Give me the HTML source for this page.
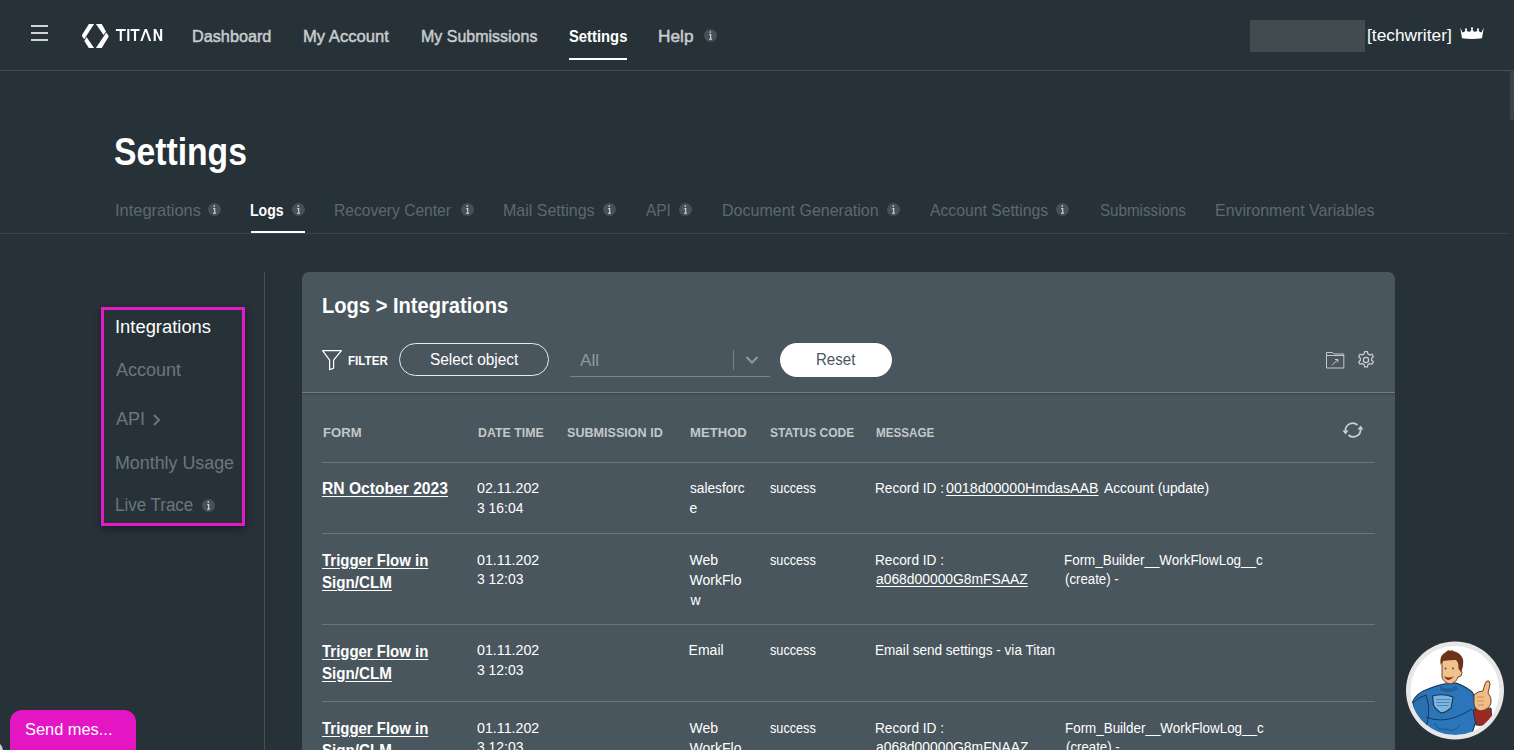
<!DOCTYPE html>
<html><head><meta charset="utf-8"><title>Titan Settings - Logs</title>
<style>
html,body{margin:0;padding:0;width:1514px;height:750px;overflow:hidden;background:#263238;font-family:"Liberation Sans",sans-serif;}
.t{position:absolute;white-space:nowrap;line-height:1;transform-origin:0 0;}
.abs{position:absolute;}
.info{position:absolute;border-radius:50%;}
.info svg{position:absolute;left:0;top:0;}
</style></head><body>
<!-- header -->
<div class="abs" style="left:0;top:70px;width:1514px;height:1px;background:#454d52"></div>
<div class="abs" style="left:31px;top:25px;width:17px;height:2px;background:#d2d2d2"></div>
<div class="abs" style="left:31px;top:32px;width:17px;height:2px;background:#d2d2d2"></div>
<div class="abs" style="left:31px;top:39px;width:17px;height:2px;background:#d2d2d2"></div>
<svg class="abs" style="left:0;top:0" width="120" height="60" viewBox="0 0 120 60">
 <g fill="#ffffff">
  <path d="M88.9,24 L94.1,24 L84.2,39.3 L82.2,36.6 Q81.6,35.5 82.3,34.4 Z"/>
  <path d="M86.5,37.1 L94.1,48 L88.8,48 L84.4,41 Z"/>
  <path d="M95.9,24 L101.7,24 L106,31.4 L103.6,35 Z"/>
  <path d="M106.3,32.6 L108.3,35.4 Q108.8,36.3 108.3,37.2 L101.7,48 L95.9,48 Z"/>
 </g>
</svg>
<svg class="abs" style="left:110px;top:24px" width="60" height="22" viewBox="110 24 60 22"><g stroke="#fff" stroke-width="2.1" fill="none" stroke-linejoin="miter">
 <path d="M115.9,30 H125.7 M120.8,30 V41"/><path d="M128.3,29 V41"/><path d="M130.5,30 H139.5 M135,30 V41"/></g><g fill="#fff"><path d="M140.3,41 L144.7,28.9 L146.9,28.9 L151.2,41 L149,41 L145.8,31.6 L142.5,41 Z"/><path d="M153.7,41 L153.7,29 L156,29 L160.1,37.4 L160.1,29 L162.2,29 L162.2,41 L159.9,41 L155.8,32.6 L155.8,41 Z"/></g></svg>
<div class="abs" style="left:569px;top:58px;width:58px;height:2px;background:#ffffff"></div>
<div class="info" style="left:704px;top:29px;width:13px;height:13px;background:#465056"><svg width="13" height="13" viewBox="0 0 13 13"><path d="M5.4 3.2h1.6M6.5 2.2v0.9M5.3 5.6h1.4v4.4M5 10.2h3" stroke="#d4d7d9" stroke-width="1.15" fill="none"/></svg></div>
<div class="abs" style="left:1250px;top:20px;width:115px;height:32px;background:#414b50"></div>
<svg class="abs" style="left:1460px;top:27px" width="24" height="13" viewBox="0 0 24 13">
 <path fill="#fff" d="M0.2,0.4 L2.4,5.2 Q4,5.9 5.2,3.4 L6,2.4 L6.8,3.4 Q8.6,6 10.6,4 L12,1.6 L13.4,4 Q15.4,6 17.2,3.4 L18,2.4 L18.8,3.4 Q20,5.9 21.6,5.2 L23.8,0.4 L22,11.2 Q12,12.8 2,11.2 Z"/>
 <circle cx="6" cy="2.2" r="1" fill="#fff"/><circle cx="12" cy="1.3" r="1.1" fill="#fff"/><circle cx="18" cy="2.2" r="1" fill="#fff"/>
</svg>
<div class="abs" style="left:1510px;top:71px;width:4px;height:49px;background:#3a454b;border-radius:2px"></div>
<!-- tabs -->
<div class="info" style="left:208px;top:203px;width:13px;height:13px;background:#465056"><svg width="13" height="13" viewBox="0 0 13 13"><path d="M5.4 3.2h1.6M6.5 2.2v0.9M5.3 5.6h1.4v4.4M5 10.2h3" stroke="#d4d7d9" stroke-width="1.15" fill="none"/></svg></div><div class="info" style="left:292px;top:203px;width:13px;height:13px;background:#465056"><svg width="13" height="13" viewBox="0 0 13 13"><path d="M5.4 3.2h1.6M6.5 2.2v0.9M5.3 5.6h1.4v4.4M5 10.2h3" stroke="#d4d7d9" stroke-width="1.15" fill="none"/></svg></div><div class="info" style="left:461px;top:203px;width:13px;height:13px;background:#465056"><svg width="13" height="13" viewBox="0 0 13 13"><path d="M5.4 3.2h1.6M6.5 2.2v0.9M5.3 5.6h1.4v4.4M5 10.2h3" stroke="#d4d7d9" stroke-width="1.15" fill="none"/></svg></div><div class="info" style="left:603px;top:203px;width:13px;height:13px;background:#465056"><svg width="13" height="13" viewBox="0 0 13 13"><path d="M5.4 3.2h1.6M6.5 2.2v0.9M5.3 5.6h1.4v4.4M5 10.2h3" stroke="#d4d7d9" stroke-width="1.15" fill="none"/></svg></div><div class="info" style="left:679px;top:203px;width:13px;height:13px;background:#465056"><svg width="13" height="13" viewBox="0 0 13 13"><path d="M5.4 3.2h1.6M6.5 2.2v0.9M5.3 5.6h1.4v4.4M5 10.2h3" stroke="#d4d7d9" stroke-width="1.15" fill="none"/></svg></div><div class="info" style="left:887px;top:203px;width:13px;height:13px;background:#465056"><svg width="13" height="13" viewBox="0 0 13 13"><path d="M5.4 3.2h1.6M6.5 2.2v0.9M5.3 5.6h1.4v4.4M5 10.2h3" stroke="#d4d7d9" stroke-width="1.15" fill="none"/></svg></div><div class="info" style="left:1056px;top:203px;width:13px;height:13px;background:#465056"><svg width="13" height="13" viewBox="0 0 13 13"><path d="M5.4 3.2h1.6M6.5 2.2v0.9M5.3 5.6h1.4v4.4M5 10.2h3" stroke="#d4d7d9" stroke-width="1.15" fill="none"/></svg></div>
<div class="abs" style="left:251px;top:231px;width:54px;height:2px;background:#ffffff"></div>
<div class="abs" style="left:0;top:233px;width:1509px;height:1px;background:#3a4349"></div>
<!-- sidebar -->
<div class="abs" style="left:101px;top:307px;width:138px;height:213px;border:3px solid #e31bc6;box-shadow:0 3px 8px rgba(0,0,0,0.4)"></div>
<svg class="abs" style="left:150px;top:411px" width="14" height="18" viewBox="0 0 14 18"><path d="M4,4 L9,9 L4,14" stroke="#6d767b" stroke-width="1.9" fill="none"/></svg>
<div class="info" style="left:202px;top:499px;width:13px;height:13px;background:#465056"><svg width="13" height="13" viewBox="0 0 13 13"><path d="M5.4 3.2h1.6M6.5 2.2v0.9M5.3 5.6h1.4v4.4M5 10.2h3" stroke="#d4d7d9" stroke-width="1.15" fill="none"/></svg></div>
<div class="abs" style="left:264px;top:272px;width:1px;height:478px;background:#484f54"></div>
<!-- card -->
<div class="abs" style="left:302px;top:272px;width:1093px;height:500px;background:#4a565d;border-radius:7px"></div>
<svg class="abs" style="left:320px;top:348px" width="24" height="24" viewBox="0 0 24 24"><path d="M2.6,2.6 H21.4 L13.6,12.2 V20.2 L9.6,21.6 V12.2 Z" stroke="#ffffff" stroke-width="1.2" fill="none" stroke-linejoin="round"/></svg>
<div class="abs" style="left:399px;top:343px;width:148px;height:31px;border:1.5px solid #e8eaeb;border-radius:17px;box-sizing:content-box"></div>
<div class="abs" style="left:570px;top:376px;width:200px;height:1px;background:#7a868c"></div>
<div class="abs" style="left:733px;top:350px;width:1px;height:20px;background:#76838a"></div>
<svg class="abs" style="left:744px;top:354px" width="16" height="12" viewBox="0 0 16 12"><path d="M2.5,3 L8,8.5 L13.5,3" stroke="#8b9aa2" stroke-width="2" fill="none"/></svg>
<div class="abs" style="left:780px;top:343px;width:112px;height:34px;background:#ffffff;border-radius:17px"></div>
<svg class="abs" style="left:1324px;top:350px" width="22" height="20" viewBox="0 0 22 20"><g stroke="#c4c9cc" stroke-width="1" fill="none"><path d="M2.5,2.5 H8.5 L10,4 H19.8 V18 H2.5 Z"/><path d="M2.5,5.5 H19.8"/><path d="M8.2,15 L13.9,9.5 M11,9.5 H13.9 V12.4"/></g></svg>
<svg class="abs" style="left:1356px;top:350px" width="20" height="20" viewBox="0 0 20 20"><path fill="none" stroke="#c9ced1" stroke-width="1.2" d="M8.6,1.6 h2.8 l0.5,2.3 a6.2,6.2 0 0 1 1.8,1.05 l2.25,-0.75 l1.4,2.42 l-1.75,1.57 a6.2,6.2 0 0 1 0,2.1 l1.75,1.57 l-1.4,2.42 l-2.25,-0.75 a6.2,6.2 0 0 1 -1.8,1.05 l-0.5,2.3 h-2.8 l-0.5,-2.3 a6.2,6.2 0 0 1 -1.8,-1.05 l-2.25,0.75 l-1.4,-2.42 l1.75,-1.57 a6.2,6.2 0 0 1 0,-2.1 l-1.75,-1.57 l1.4,-2.42 l2.25,0.75 a6.2,6.2 0 0 1 1.8,-1.05 Z"/><circle cx="10" cy="10" r="2.6" fill="none" stroke="#c9ced1" stroke-width="1.2"/></svg>
<div class="abs" style="left:302px;top:392px;width:1093px;height:1px;background:#6f7c83"></div>
<div class="abs" style="left:302px;top:393px;width:1093px;height:3px;background:linear-gradient(#3f484e,#4a565d)"></div>
<svg class="abs" style="left:1341px;top:420px" width="24" height="20" viewBox="0 0 24 20"><g fill="none" stroke="#c9ced1" stroke-width="1.7"><path d="M4.5,11 A7.2,7.2 0 0 1 16.5,5"/><path d="M19.5,9 A7.2,7.2 0 0 1 7.5,15"/></g><path fill="#c9ced1" d="M1.5,10.5 L7.5,10.5 L4.5,14.5 Z M16.5,9.5 L22.5,9.5 L19.5,5.5 Z"/></svg>
<div class="abs" style="left:322px;top:462px;width:1053px;height:1px;background:#6a767c"></div>
<div class="abs" style="left:322px;top:533px;width:1053px;height:1px;background:#6a767c"></div>
<div class="abs" style="left:322px;top:624px;width:1053px;height:1px;background:#6a767c"></div>
<div class="abs" style="left:322px;top:701px;width:1053px;height:1px;background:#6a767c"></div>
<!-- chat button -->
<div class="abs" style="left:-14px;top:742px;width:17px;height:30px;border-radius:9px;background:#cfd2d3"></div>
<div class="abs" style="left:10px;top:710px;width:126px;height:50px;background:#e416c4;border-radius:12px"></div>
<!-- avatar -->
<svg class="abs" style="left:1404px;top:639px" width="102" height="104" viewBox="0 0 102 104">
 <defs><clipPath id="cc"><circle cx="51" cy="51.6" r="44.5"/></clipPath></defs>
 <circle cx="51" cy="51.6" r="49" fill="#e8e6e6"/>
 <circle cx="51" cy="51.6" r="44.5" fill="#ffffff"/>
 <g clip-path="url(#cc)" stroke-linejoin="round">
  <path d="M8,64 Q12,54 24,50 Q34,46 40,45 L52,44 Q60,47 64,50 Q70,53 70,58 L72,70 Q74,80 70,88 L66,100 L8,100 Z" fill="#2b76bb" stroke="#17324d" stroke-width="1.1"/>
  <path d="M9,64 Q14,58 22,56 Q26,66 24,80 L20,96 Q12,90 9,80 Z" fill="#2a70ae" stroke="#17324d" stroke-width="0.9"/>
  <path d="M36,47 Q44,52 52,47 L54,50 Q46,56 36,51 Z" fill="#245f96"/>
  <path d="M28.6,57 Q39,54 49,58 L47,69 Q41,74 37,74 Q31,70 29.5,66 Z" fill="#7db4e0" stroke="#17324d" stroke-width="1.1"/>
  <path d="M32,60.5 H46 M32,63.5 H45.5 M33,66.5 H44.5" stroke="#3f78ad" stroke-width="0.8"/>
  <path d="M22,78 Q36,84 52,78 Q62,74 68,70" fill="none" stroke="#17324d" stroke-width="0.9"/>
  <path d="M30,84 Q34,92 42,90 Q50,94 56,86" fill="none" stroke="#1d4f80" stroke-width="0.9"/>
  <path d="M69,71 L87,69 L88,80 Q82,88 72,86 Z" fill="#9b2a22" stroke="#17324d" stroke-width="0.9"/>
  <path d="M70,56 Q74,52 79,52 L81,45 Q82,41 85,42 Q87,44 85,50 L84,54 Q88,58 87,64 Q85,71 76,72 Q70,70 70,64 Z" fill="#f0bd87" stroke="#5a3418" stroke-width="0.9"/>
  <path d="M73,58 H80 M73,62 H80 M74,66 H80" stroke="#b57a45" stroke-width="0.7"/>
  <path d="M38,24 Q38,18 44,17 L53,18 Q56,22 55,30 L57,31 Q59,33 57,37 L54,38 Q52,44 46,45 Q40,44 38,38 Z" fill="#f2c18c" stroke="#5a3418" stroke-width="0.9"/>
  <path d="M36.5,26 Q35,16 42,13 Q44,10 47,12 Q49,10 49,12 Q56,13 59,20 Q60,27 57,33 L55,30 Q55,24 52,21 Q45,21 39,22 Z" fill="#6b3419"/>
  <path d="M40,37 Q45,40 50,37 Q47,41 44,41 Q41,40 40,37 Z" fill="#8f2a20"/>
  <circle cx="41.5" cy="29.5" r="1" fill="#2a5d8c"/><circle cx="49" cy="29.5" r="1" fill="#2a5d8c"/>
 </g>
</svg>
<span class="t" style="left:192.05px;top:27.61px;font-size:17px;font-weight:400;color:#c9cccd;transform:scaleX(0.9546);-webkit-text-stroke:0.5px currentColor;">Dashboard</span>
<span class="t" style="left:303.02px;top:27.61px;font-size:17px;font-weight:400;color:#c9cccd;transform:scaleX(0.9763);-webkit-text-stroke:0.5px currentColor;">My Account</span>
<span class="t" style="left:421.06px;top:27.61px;font-size:17px;font-weight:400;color:#c9cccd;transform:scaleX(0.9406);-webkit-text-stroke:0.5px currentColor;">My Submissions</span>
<span class="t" style="left:569.00px;top:27.61px;font-size:17px;font-weight:700;color:#ffffff;transform:scaleX(0.8708);">Settings</span>
<span class="t" style="left:658.49px;top:27.61px;font-size:17px;font-weight:400;color:#c9cccd;transform:scaleX(1.0147);-webkit-text-stroke:0.5px currentColor;">Help</span>
<span class="t" style="left:1366.98px;top:27.21px;font-size:17px;font-weight:400;color:#ffffff;transform:scaleX(1.0195);">[techwriter]</span>
<span class="t" style="left:114.11px;top:133.13px;font-size:38px;font-weight:700;color:#ffffff;transform:scaleX(0.8865);">Settings</span>
<span class="t" style="left:114.53px;top:201.91px;font-size:17px;font-weight:400;color:#5f686d;transform:scaleX(0.9675);">Integrations</span>
<span class="t" style="left:250.47px;top:201.91px;font-size:17px;font-weight:700;color:#ffffff;transform:scaleX(0.8275);">Logs</span>
<span class="t" style="left:334.38px;top:201.91px;font-size:17px;font-weight:400;color:#5f686d;transform:scaleX(0.9166);">Recovery Center</span>
<span class="t" style="left:503.16px;top:201.91px;font-size:17px;font-weight:400;color:#5f686d;transform:scaleX(0.9403);">Mail Settings</span>
<span class="t" style="left:645.80px;top:201.91px;font-size:17px;font-weight:400;color:#5f686d;transform:scaleX(0.9071);">API</span>
<span class="t" style="left:721.76px;top:201.91px;font-size:17px;font-weight:400;color:#5f686d;transform:scaleX(0.9420);">Document Generation</span>
<span class="t" style="left:930.00px;top:201.91px;font-size:17px;font-weight:400;color:#5f686d;transform:scaleX(0.9254);">Account Settings</span>
<span class="t" style="left:1099.50px;top:201.91px;font-size:17px;font-weight:400;color:#5f686d;transform:scaleX(0.8918);">Submissions</span>
<span class="t" style="left:1215.06px;top:201.91px;font-size:17px;font-weight:400;color:#5f686d;transform:scaleX(0.9390);">Environment Variables</span>
<span class="t" style="left:114.78px;top:317.76px;font-size:18px;font-weight:400;color:#ffffff;transform:scaleX(1.0208);">Integrations</span>
<span class="t" style="left:115.50px;top:360.56px;font-size:18px;font-weight:400;color:#6d767b;transform:scaleX(0.9994);">Account</span>
<span class="t" style="left:115.50px;top:410.46px;font-size:18px;font-weight:400;color:#6d767b;transform:scaleX(0.9996);">API</span>
<span class="t" style="left:114.71px;top:453.76px;font-size:18px;font-weight:400;color:#6d767b;transform:scaleX(0.9912);">Monthly Usage</span>
<span class="t" style="left:114.76px;top:496.36px;font-size:18px;font-weight:400;color:#6d767b;transform:scaleX(0.9423);">Live Trace</span>
<span class="t" style="left:321.79px;top:295.28px;font-size:22px;font-weight:700;color:#ffffff;transform:scaleX(0.9145);">Logs &gt; Integrations</span>
<span class="t" style="left:348.30px;top:354.20px;font-size:13px;font-weight:700;color:#ffffff;transform:scaleX(0.8950);">FILTER</span>
<span class="t" style="left:430.00px;top:352.16px;font-size:16px;font-weight:400;color:#ffffff;transform:scaleX(0.9635);">Select object</span>
<span class="t" style="left:580.20px;top:352.86px;font-size:16px;font-weight:400;color:#8d989e;transform:scaleX(1.0797);">All</span>
<span class="t" style="left:816.16px;top:352.26px;font-size:16px;font-weight:400;color:#4a565d;transform:scaleX(0.9407);">Reset</span>
<span class="t" style="left:322.50px;top:425.80px;font-size:13px;font-weight:700;color:#c3c8cb;transform:scaleX(1.0069);">FORM</span>
<span class="t" style="left:477.50px;top:425.80px;font-size:13px;font-weight:700;color:#c3c8cb;transform:scaleX(0.9508);">DATE TIME</span>
<span class="t" style="left:567.00px;top:425.80px;font-size:13px;font-weight:700;color:#c3c8cb;transform:scaleX(0.9679);">SUBMISSION ID</span>
<span class="t" style="left:689.70px;top:425.80px;font-size:13px;font-weight:700;color:#c3c8cb;transform:scaleX(1.0082);">METHOD</span>
<span class="t" style="left:770.40px;top:425.80px;font-size:13px;font-weight:700;color:#c3c8cb;transform:scaleX(0.9239);">STATUS CODE</span>
<span class="t" style="left:875.50px;top:425.80px;font-size:13px;font-weight:700;color:#c3c8cb;transform:scaleX(0.8953);">MESSAGE</span>
<span class="t" style="left:321.52px;top:481.26px;font-size:16px;font-weight:700;color:#fff;transform:scaleX(0.9763);text-decoration:underline;text-underline-offset:2px;">RN October 2023</span>
<span class="t" style="left:477.00px;top:480.95px;font-size:14px;font-weight:400;color:#fff;transform:scaleX(1.0170);">02.11.202</span>
<span class="t" style="left:477.00px;top:500.75px;font-size:14px;font-weight:400;color:#fff;transform:scaleX(0.9931);">3 16:04</span>
<span class="t" style="left:689.50px;top:481.25px;font-size:14px;font-weight:400;color:#fff;transform:scaleX(0.9764);">salesforc</span>
<span class="t" style="left:689.50px;top:501.15px;font-size:14px;font-weight:400;color:#fff;transform:scaleX(1.0000);">e</span>
<span class="t" style="left:770.40px;top:481.25px;font-size:14px;font-weight:400;color:#fff;transform:scaleX(0.9056);">success</span>
<span class="t" style="left:874.82px;top:481.25px;font-size:14px;font-weight:400;color:#fff;transform:scaleX(0.9752);">Record ID :</span>
<span class="t" style="left:945.70px;top:481.25px;font-size:14px;font-weight:400;color:#fff;transform:scaleX(1.0155);text-decoration:underline;text-underline-offset:2px;">0018d00000HmdasAAB</span>
<span class="t" style="left:1104.00px;top:481.25px;font-size:14px;font-weight:400;color:#fff;transform:scaleX(0.9853);">Account (update)</span>
<span class="t" style="left:322.00px;top:553.06px;font-size:16px;font-weight:700;color:#fff;transform:scaleX(0.9344);text-decoration:underline;text-underline-offset:2px;">Trigger Flow in</span>
<span class="t" style="left:322.00px;top:575.46px;font-size:16px;font-weight:700;color:#fff;transform:scaleX(0.9464);text-decoration:underline;text-underline-offset:2px;">Sign/CLM</span>
<span class="t" style="left:477.00px;top:552.55px;font-size:14px;font-weight:400;color:#fff;transform:scaleX(1.0170);">01.11.202</span>
<span class="t" style="left:477.00px;top:572.35px;font-size:14px;font-weight:400;color:#fff;transform:scaleX(0.9931);">3 12:03</span>
<span class="t" style="left:689.60px;top:552.55px;font-size:14px;font-weight:400;color:#fff;transform:scaleX(1.0000);">Web</span>
<span class="t" style="left:689.60px;top:572.55px;font-size:14px;font-weight:400;color:#fff;transform:scaleX(1.0000);">WorkFlo</span>
<span class="t" style="left:690.60px;top:592.55px;font-size:14px;font-weight:400;color:#fff;transform:scaleX(1.0000);">w</span>
<span class="t" style="left:770.30px;top:552.55px;font-size:14px;font-weight:400;color:#fff;transform:scaleX(0.9056);">success</span>
<span class="t" style="left:874.82px;top:552.55px;font-size:14px;font-weight:400;color:#fff;transform:scaleX(0.9752);">Record ID :</span>
<span class="t" style="left:875.80px;top:572.35px;font-size:14px;font-weight:400;color:#fff;transform:scaleX(0.9898);text-decoration:underline;text-underline-offset:2px;">a068d00000G8mFSAAZ</span>
<span class="t" style="left:1064.44px;top:552.55px;font-size:14px;font-weight:400;color:#fff;transform:scaleX(0.9574);">Form_Builder__WorkFlowLog__c</span>
<span class="t" style="left:1065.40px;top:572.35px;font-size:14px;font-weight:400;color:#fff;transform:scaleX(0.9453);">(create) -</span>
<span class="t" style="left:322.00px;top:643.56px;font-size:16px;font-weight:700;color:#fff;transform:scaleX(0.9344);text-decoration:underline;text-underline-offset:2px;">Trigger Flow in</span>
<span class="t" style="left:322.00px;top:665.96px;font-size:16px;font-weight:700;color:#fff;transform:scaleX(0.9464);text-decoration:underline;text-underline-offset:2px;">Sign/CLM</span>
<span class="t" style="left:477.00px;top:643.05px;font-size:14px;font-weight:400;color:#fff;transform:scaleX(1.0170);">01.11.202</span>
<span class="t" style="left:477.00px;top:662.85px;font-size:14px;font-weight:400;color:#fff;transform:scaleX(0.9931);">3 12:03</span>
<span class="t" style="left:688.60px;top:643.05px;font-size:14px;font-weight:400;color:#fff;transform:scaleX(1.0000);">Email</span>
<span class="t" style="left:770.30px;top:643.05px;font-size:14px;font-weight:400;color:#fff;transform:scaleX(0.9056);">success</span>
<span class="t" style="left:874.83px;top:643.05px;font-size:14px;font-weight:400;color:#fff;transform:scaleX(0.9683);">Email send settings - via Titan</span>
<span class="t" style="left:322.00px;top:721.06px;font-size:16px;font-weight:700;color:#fff;transform:scaleX(0.9344);text-decoration:underline;text-underline-offset:2px;">Trigger Flow in</span>
<span class="t" style="left:322.00px;top:743.46px;font-size:16px;font-weight:700;color:#fff;transform:scaleX(0.9464);text-decoration:underline;text-underline-offset:2px;">Sign/CLM</span>
<span class="t" style="left:477.00px;top:720.55px;font-size:14px;font-weight:400;color:#fff;transform:scaleX(1.0170);">01.11.202</span>
<span class="t" style="left:477.00px;top:740.35px;font-size:14px;font-weight:400;color:#fff;transform:scaleX(0.9931);">3 12:03</span>
<span class="t" style="left:689.60px;top:720.55px;font-size:14px;font-weight:400;color:#fff;transform:scaleX(1.0000);">Web</span>
<span class="t" style="left:689.60px;top:740.55px;font-size:14px;font-weight:400;color:#fff;transform:scaleX(1.0000);">WorkFlo</span>
<span class="t" style="left:690.60px;top:760.55px;font-size:14px;font-weight:400;color:#fff;transform:scaleX(1.0000);">w</span>
<span class="t" style="left:770.30px;top:720.55px;font-size:14px;font-weight:400;color:#fff;transform:scaleX(0.9056);">success</span>
<span class="t" style="left:874.82px;top:720.55px;font-size:14px;font-weight:400;color:#fff;transform:scaleX(0.9752);">Record ID :</span>
<span class="t" style="left:875.80px;top:740.35px;font-size:14px;font-weight:400;color:#fff;transform:scaleX(0.9901);text-decoration:underline;text-underline-offset:2px;">a068d00000G8mFNAAZ</span>
<span class="t" style="left:1065.44px;top:720.55px;font-size:14px;font-weight:400;color:#fff;transform:scaleX(0.9574);">Form_Builder__WorkFlowLog__c</span>
<span class="t" style="left:1066.40px;top:740.35px;font-size:14px;font-weight:400;color:#fff;transform:scaleX(0.9453);">(create) -</span>
<span class="t" style="left:25.00px;top:721.76px;font-size:16px;font-weight:400;color:#ffffff;transform:scaleX(1.0247);">Send mes...</span>
</body></html>
